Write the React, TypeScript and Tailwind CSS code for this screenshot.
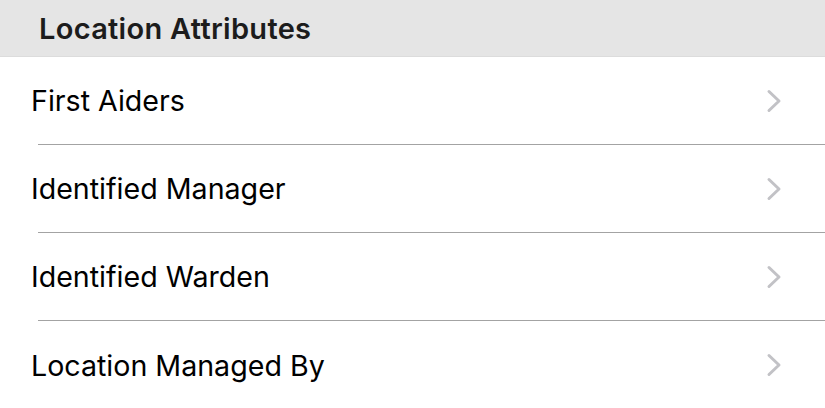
const items = [
  "First Aiders",
  "Identified Manager",
  "Identified Warden",
  "Location Managed By",
];

const Chevron = () => (
  <svg width="16" height="24" viewBox="0 0 16 24" fill="none">
    <path
      d="M3 2.5l10 9.5-10 9.5"
      stroke="#c2c2c6"
      strokeWidth="3"
      strokeLinecap="round"
      strokeLinejoin="round"
    />
  </svg>
);

export default function App() {
  return (
    <div className="w-[825px] h-[408px] bg-white overflow-hidden font-['Inter',sans-serif]">
      <div className="h-[57px] bg-[#e5e5e5] border-b border-[#dcdcdc] flex items-center pl-[39px] pt-[1px]">
        <span className="text-[29px] font-semibold text-[#1c1c1c] tracking-[0.3px]">
          Location Attributes
        </span>
      </div>
      {items.map((label, i) => (
        <div key={label} className="pl-[38px]">
          <div
            className={
              i < items.length - 1
                ? "h-[88px] flex items-center justify-between border-b border-[#a3a3a3] pr-[43px]"
                : "h-[88px] flex items-center justify-between pr-[43px]"
            }
          >
            <span className="-ml-[7px] pt-[2px] text-[28.6px] text-black">{label}</span>
            <Chevron />
          </div>
        </div>
      ))}
    </div>
  );
}
